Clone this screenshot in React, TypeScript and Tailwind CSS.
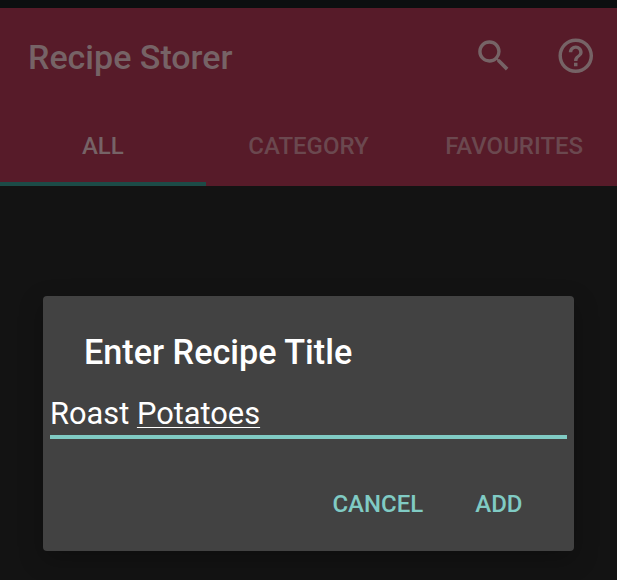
import { MdHelpOutline, MdSearch } from "react-icons/md";

const tabs = [
  { label: "ALL", active: true },
  { label: "CATEGORY", active: false },
  { label: "FAVOURITES", active: false },
];

function AppBar() {
  return (
    <header className="h-[178px] bg-[#571b29]">
      <div className="flex h-[98px] items-center pl-[28px] pr-[21px] text-[#766366]">
        <h1 className="flex-1 whitespace-nowrap pb-px text-[34px] font-medium leading-none">Recipe Storer</h1>
        <div className="flex gap-10 pb-[2px]">
          <button aria-label="Search"><MdSearch size={41.5} /></button>
          <button aria-label="Help"><MdHelpOutline size={41.5} /></button>
        </div>
      </div>
      <nav className="grid h-20 grid-cols-3">
        {tabs.map((tab) => (
          <button
            key={tab.label}
            className={
              tab.active
                ? "border-b-4 border-[#1c4b47] pt-1 text-[24px] font-medium leading-none text-[#766366]"
                : "border-b-4 border-transparent pt-1 text-[24px] font-medium leading-none text-[#6b484f]"
            }
          >
            {tab.label}
          </button>
        ))}
      </nav>
    </header>
  );
}

function RecipeDialog() {
  return (
    <section className="mx-auto mt-[110px] h-[255px] w-[531px] rounded-[4px] bg-[#424242] px-[7px] pt-[39px] shadow-[0_8px_24px_rgba(0,0,0,0.25)]">
      <h2 className="whitespace-nowrap pl-[34px] text-[34.2px] font-medium leading-[34px] text-white">Enter Recipe Title</h2>
      <div className="mt-[23px] h-[47px] border-b-[4px] border-[#80cbc4] text-[30.8px] leading-[43px] text-white">
        Roast <span className="underline decoration-1 underline-offset-[3px]">Potatoes</span>
      </div>
      <div className="mt-[53px] flex justify-end gap-[52px] pr-[44.5px] text-[24px] font-medium leading-[24px] text-[#80cbc4]">
        <button>CANCEL</button>
        <button>ADD</button>
      </div>
    </section>
  );
}

export default function App() {
  return (
    <main className="h-[580px] w-[617px] overflow-hidden border-t-8 border-[#0c0f10] bg-[#131313] font-['Roboto',sans-serif]">
      <AppBar />
      <RecipeDialog />
    </main>
  );
}
